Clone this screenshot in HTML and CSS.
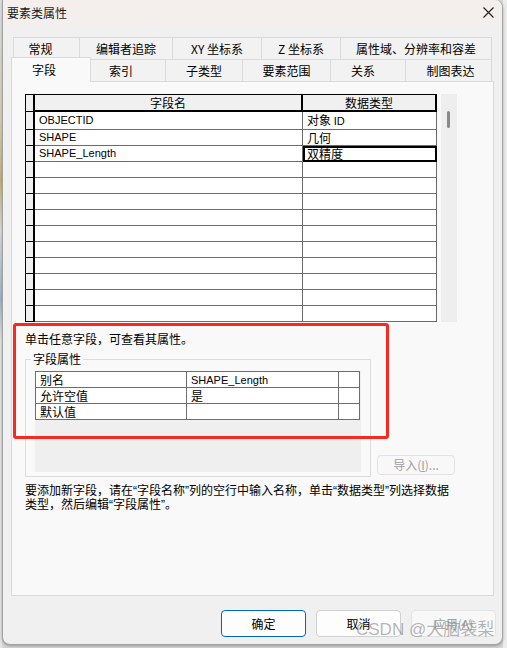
FILE: index.html
```html
<!DOCTYPE html>
<html>
<head>
  <title>要素类属性</title>
  <link rel="stylesheet" href="styles.css">
</head>
<body>
  <div class="desktop">
    <div class="side side-left"></div>
    <div class="window">
      <div class="titlebar">
        <span class="title">要素类属性</span>
        <svg class="close" width="11" height="11" viewBox="0 0 11 11">
          <path d="M0.5 0.5 L10.5 10.5 M10.5 0.5 L0.5 10.5" stroke="#1f1f1f" stroke-width="1.1" fill="none"/>
        </svg>
      </div>

      <div class="client">
        <div class="tabs">
          <div class="tab-row back">
            <div class="tab">常规</div>
            <div class="tab">编辑者追踪</div>
            <div class="tab">XY 坐标系</div>
            <div class="tab">Z 坐标系</div>
            <div class="tab">属性域、分辨率和容差</div>
          </div>
          <div class="tab-row front">
            <div class="tab active">字段</div>
            <div class="tab">索引</div>
            <div class="tab">子类型</div>
            <div class="tab">要素范围</div>
            <div class="tab">关系</div>
            <div class="tab">制图表达</div>
          </div>
        </div>

        <div class="panel">
          <div class="grid-area">
            <table class="grid">
              <colgroup>
                <col class="col-head">
                <col class="col-name">
                <col class="col-type">
              </colgroup>
              <thead>
                <tr>
                  <th class="row-head"></th>
                  <th>字段名</th>
                  <th>数据类型</th>
                </tr>
              </thead>
              <tbody>
                <tr><td class="row-head"></td><td class="latin">OBJECTID</td><td>对象 <span class="latin">ID</span></td></tr>
                <tr><td class="row-head"></td><td class="latin">SHAPE</td><td>几何</td></tr>
                <tr><td class="row-head"></td><td class="latin">SHAPE_Length</td><td class="current">双精度</td></tr>
                <tr><td class="row-head"></td><td></td><td></td></tr>
                <tr><td class="row-head"></td><td></td><td></td></tr>
                <tr><td class="row-head"></td><td></td><td></td></tr>
                <tr><td class="row-head"></td><td></td><td></td></tr>
                <tr><td class="row-head"></td><td></td><td></td></tr>
                <tr><td class="row-head"></td><td></td><td></td></tr>
                <tr><td class="row-head"></td><td></td><td></td></tr>
                <tr><td class="row-head"></td><td></td><td></td></tr>
                <tr><td class="row-head"></td><td></td><td></td></tr>
                <tr><td class="row-head"></td><td></td><td></td></tr>
              </tbody>
            </table>
            <div class="scrollbar"><div class="thumb"></div></div>
          </div>

          <p class="hint">单击任意字段，可查看其属性。</p>

          <div class="props-row">
            <fieldset class="props">
              <legend>字段属性</legend>
              <div class="props-body">
                <table class="props-table">
                  <colgroup>
                    <col class="col-key">
                    <col class="col-value">
                    <col class="col-extra">
                  </colgroup>
                  <tr><td>别名</td><td class="latin">SHAPE_Length</td><td></td></tr>
                  <tr><td>允许空值</td><td>是</td><td></td></tr>
                  <tr><td>默认值</td><td></td><td></td></tr>
                </table>
              </div>
            </fieldset>
            <button class="btn import" disabled>导入(<u>I</u>)...</button>
          </div>

          <p class="note">要添加新字段，请在“字段名称”列的空行中输入名称，单击“数据类型”列选择数据<br>类型，然后编辑“字段属性”。</p>
        </div>

        <div class="actions">
          <button class="btn primary">确定</button>
          <button class="btn">取消</button>
          <button class="btn" disabled>应用(A)</button>
        </div>
      </div>

      <div class="highlight"></div>
      <div class="watermark">CSDN @大脑袋梨</div>
    </div>
    <div class="side side-right"></div>
  </div>
</body>
</html>
```

FILE: styles.css
```css
* {
  box-sizing: border-box;
}

body {
  margin: 0;
  font-family: "Noto Sans CJK SC", sans-serif;
  font-size: 12px;
  color: #000;
  background: #d8d8d8;
}

.desktop {
  display: flex;
  width: 507px;
  height: 648px;
  background: #d6d6d6;
  overflow: hidden;
}

.side-left {
  width: 2px;
  height: 648px;
  background: linear-gradient(#dfe4ea 0, #d9d2b8 120px, #c7b676 180px, #dedede 230px, #9fb7cc 300px, #e4e4e4 340px);
}

.side-right {
  width: 4px;
  height: 648px;
  background: #ececec;
}

/* dialog frame */
.window {
  position: relative;
  width: 501px;
  height: 645px;
  background: #f0f0f0;
  border: 1px solid #a3a3a3;
  border-top: none;
  border-radius: 0 8px 8px 8px;
  box-shadow: 0 1px 3px rgba(0, 0, 0, 0.3);
  overflow: hidden;
}

.titlebar {
  display: flex;
  align-items: center;
  justify-content: space-between;
  height: 25px;
  padding: 0 8px 0 4px;
  background: #f4efec;
}

.title {
  font-size: 12px;
  color: #1a1a1a;
}

/* tab strip */
.tabs {
  padding-top: 12px;
}

.tab-row {
  display: flex;
  align-items: flex-start;
  height: 22px;
}

.tab-row.back {
  margin-left: 10px;
}

.tab-row.front {
  margin-left: 8px;
}

.tab {
  height: 22px;
  line-height: 21px;
  text-align: center;
  white-space: nowrap;
  background: #f2f2f2;
  border-top: 1px solid #dadada;
  border-right: 1px solid #dadada;
}

.tab:first-child {
  border-left: 1px solid #dadada;
}

.back .tab:nth-child(1) { width: 67px; padding-right: 12px; }
.back .tab:nth-child(2) { width: 93px; }
.back .tab:nth-child(3) { width: 89px; }
.back .tab:nth-child(4) { width: 79px; }
.back .tab:nth-child(5) { width: 151px; }

.front .tab:nth-child(1) { width: 80px; padding-right: 14px; }
.front .tab:nth-child(2) { width: 75px; padding-right: 14px; }
.front .tab:nth-child(3) { width: 77px; }
.front .tab:nth-child(4) { width: 88px; }
.front .tab:nth-child(5) { width: 75px; padding-right: 10px; }
.front .tab:nth-child(6) { width: 86px; padding-left: 4px; }

.tab.active {
  position: relative;
  z-index: 1;
  height: 25px;
  margin-top: -2px;
  line-height: 23px;
  background: #f9f9f9;
}

.panel {
  width: 483px;
  height: 515px;
  margin-left: 8px;
  padding: 12px 0 0 13px;
  background: #f9f9f9;
  border: 1px solid #d9d9d9;
}

/* field grid */
.grid-area {
  display: flex;
  align-items: flex-start;
  gap: 4px;
}

.grid {
  width: 412px;
  table-layout: fixed;
  border-collapse: separate;
  border-spacing: 0;
  border-top: 1px solid #000;
  border-left: 1px solid #000;
  background: #fff;
}

.col-head { width: 9px; }
.col-name { width: 268px; }
.col-type { width: 134px; }

.grid tr {
  height: 16px;
}

.grid td,
.grid th {
  padding: 0 0 0 4px;
  line-height: 15px;
  font-weight: normal;
  text-align: left;
  white-space: nowrap;
  overflow: hidden;
  border-right: 1px solid #6b6b6b;
  border-bottom: 1px solid #6b6b6b;
}

.grid thead tr {
  height: 17px;
}

.grid th {
  text-align: center;
  padding: 0;
  background: #f0f0f0;
  border-right: 2px solid #000;
  border-bottom: 2px solid #000;
}

.grid .row-head {
  padding: 0;
  background: #f0f0f0;
  border-right: 2px solid #000;
  border-bottom: 1px solid #000;
}

.grid td.current {
  outline: 2px solid #000;
  outline-offset: -2px;
}

.latin {
  font-family: "Liberation Sans", Arial, sans-serif;
  font-size: 11px;
}

.scrollbar {
  position: relative;
  width: 16px;
  height: 228px;
  background: #eeeeee;
}

.thumb {
  width: 3px;
  height: 17px;
  margin: 17px 0 0 6px;
  border-radius: 2px;
  background: #8a8a8a;
}

.hint {
  margin: 10px 0 0;
  line-height: 14px;
}

/* field properties */
.props-row {
  display: flex;
  align-items: flex-end;
  gap: 6px;
  margin-top: 6px;
}

.props {
  width: 346px;
  margin: 0;
  padding: 0 9px 4px;
  border: 1px solid #dcdcdc;
}

.props legend {
  margin-left: -4px;
  padding: 0 2px;
  line-height: 14px;
}

.props-body {
  height: 101px;
  margin-top: 5px;
  background: #efefef;
}

.props-table {
  width: 324px;
  table-layout: fixed;
  border-collapse: collapse;
  background: #fff;
}

.col-key { width: 151px; }
.col-value { width: 152px; }
.col-extra { width: 21px; }

.props-table td {
  height: 16px;
  padding: 0 0 0 4px;
  line-height: 14px;
  border: 1px solid #6d6d6d;
  white-space: nowrap;
}

/* quotes come from the latin face so they stay narrow */
.note {
  margin: 7px 0 0;
  line-height: 14px;
  font-family: "Liberation Sans", "Noto Sans CJK SC", sans-serif;
}

/* buttons */
.btn {
  width: 85px;
  height: 27px;
  padding: 0;
  font-family: "Noto Sans CJK SC", sans-serif;
  font-size: 12px;
  color: #000;
  background: #fdfdfd;
  border: 1px solid #d0d0d0;
  border-radius: 4px;
}

.btn:disabled {
  color: #a0a0a0;
  background: #f8f8f8;
  border-color: #e3e3e3;
}

.btn.import {
  width: 78px;
  height: 20px;
  margin-bottom: 2px;
  line-height: 18px;
}

.btn.primary {
  border-color: #0067c0;
}

.actions {
  display: flex;
  justify-content: flex-end;
  gap: 10px;
  margin-top: 14px;
  padding-right: 6px;
}

/* annotation drawn over the dialog */
.highlight {
  position: absolute;
  left: 10px;
  top: 323px;
  width: 376px;
  height: 116px;
  border: 3px solid #f62a20;
  border-radius: 3px;
}

.watermark {
  position: absolute;
  left: 353px;
  top: 620px;
  font-family: "Liberation Sans", "Noto Sans CJK SC", sans-serif;
  font-size: 17px;
  line-height: 20px;
  color: rgba(120, 120, 120, 0.55);
  white-space: nowrap;
}
```
